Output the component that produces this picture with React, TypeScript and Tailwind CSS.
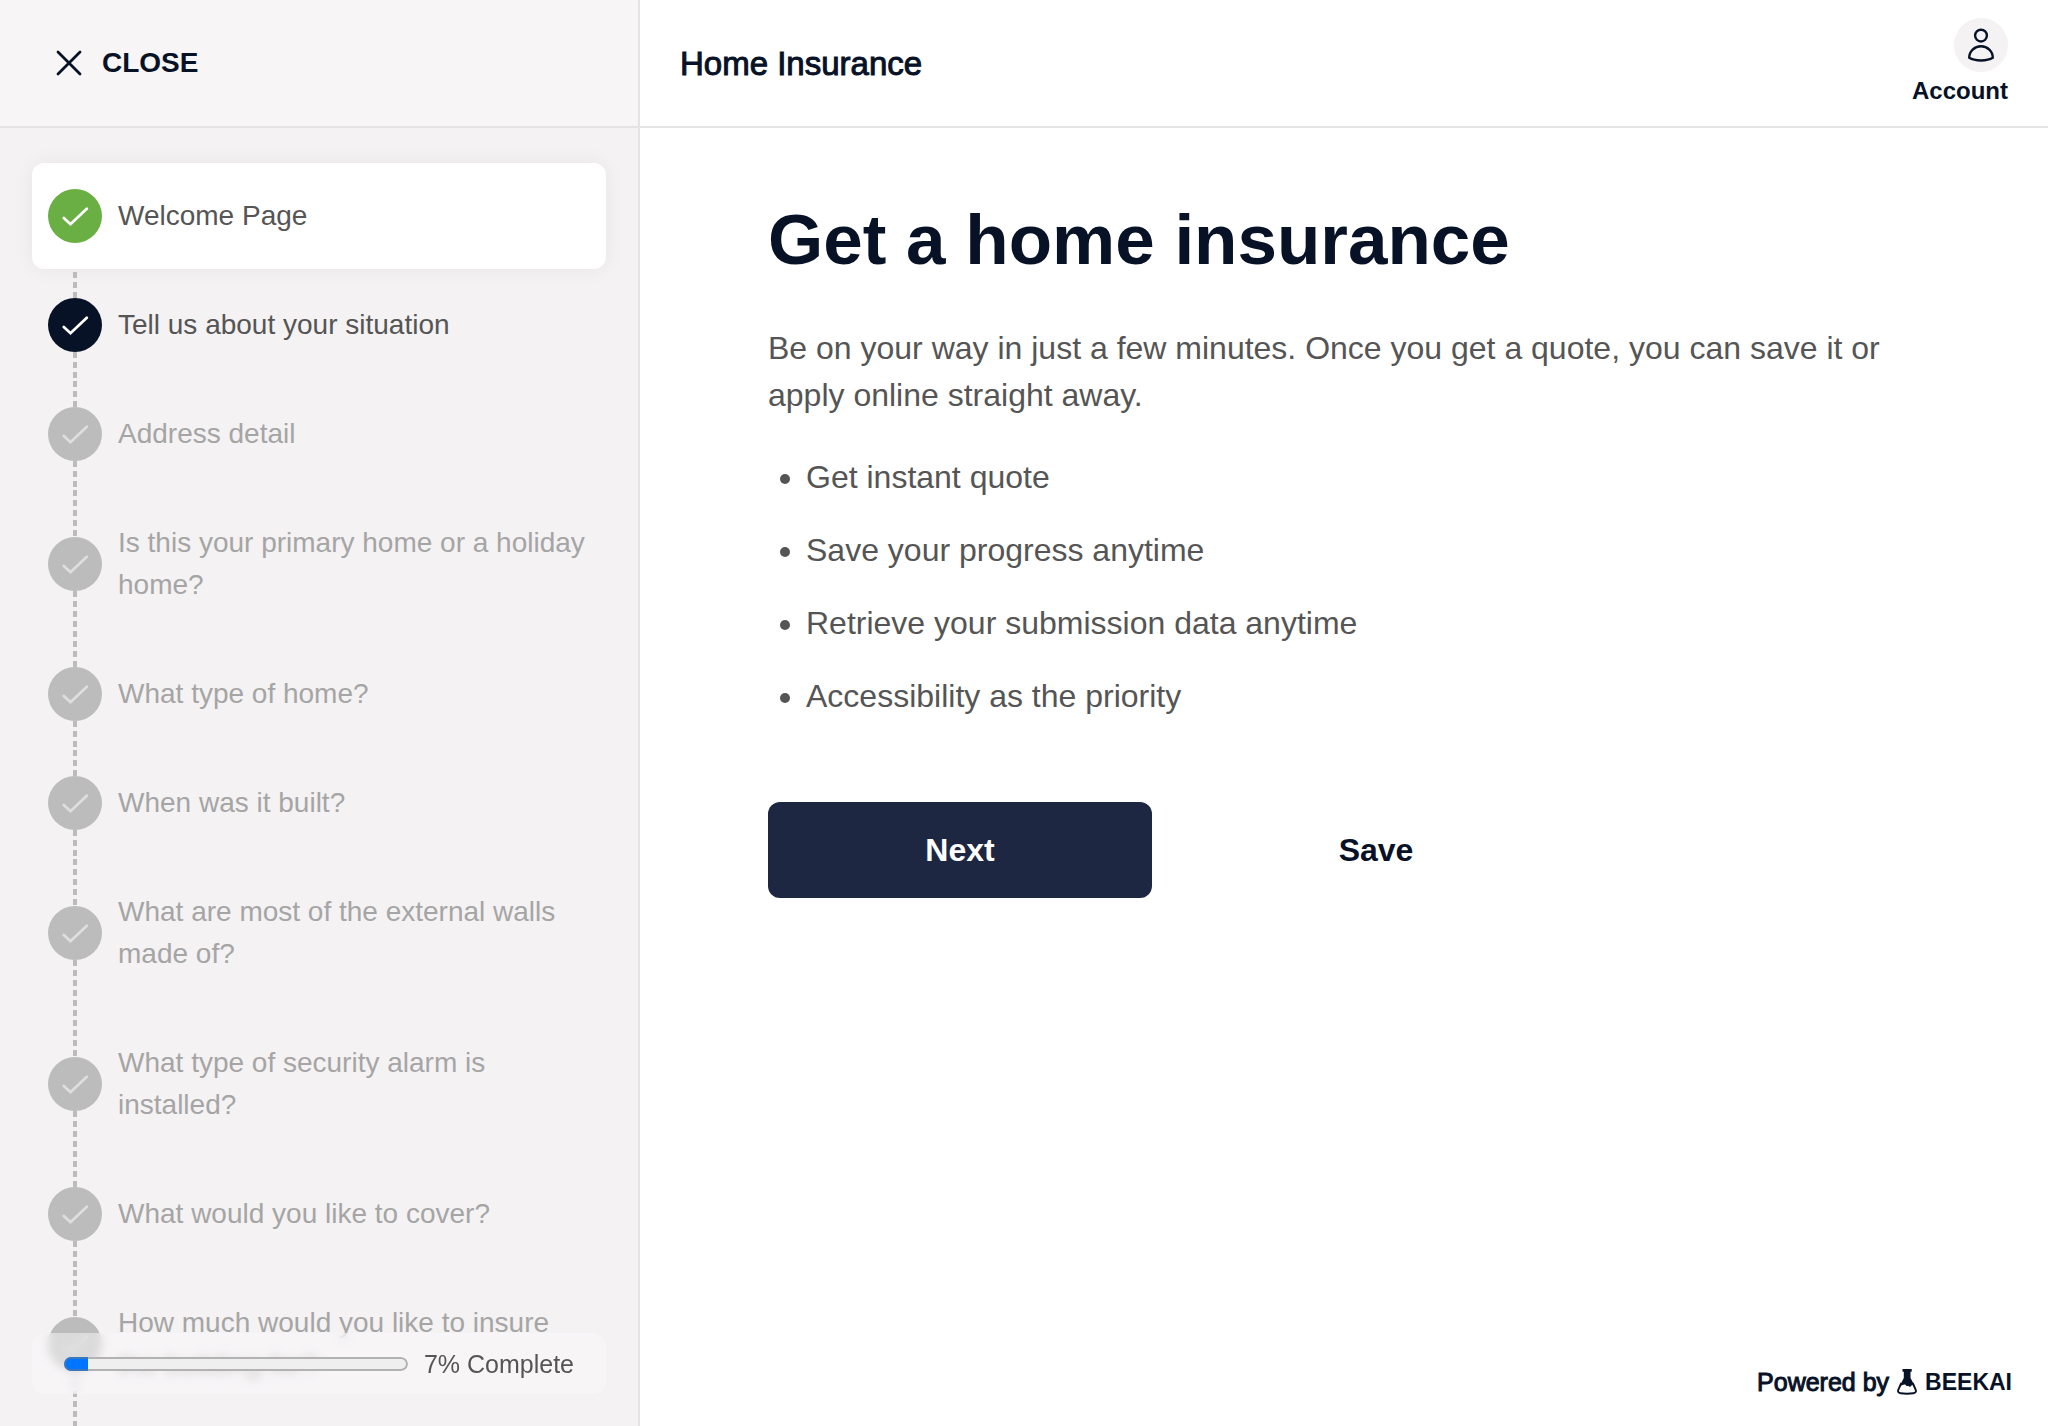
import { useState } from "react";
import clsx from "clsx";

type StepStatus = "current" | "visited" | "pending";

interface Step {
  label: string;
  status: StepStatus;
}

const STEPS: Step[] = [
  { label: "Welcome Page", status: "current" },
  { label: "Tell us about your situation", status: "visited" },
  { label: "Address detail", status: "pending" },
  { label: "Is this your primary home or a holiday home?", status: "pending" },
  { label: "What type of home?", status: "pending" },
  { label: "When was it built?", status: "pending" },
  { label: "What are most of the external walls made of?", status: "pending" },
  { label: "What type of security alarm is installed?", status: "pending" },
  { label: "What would you like to cover?", status: "pending" },
  { label: "How much would you like to insure the building for?", status: "pending" },
];

const BENEFITS = [
  "Get instant quote",
  "Save your progress anytime",
  "Retrieve your submission data anytime",
  "Accessibility as the priority",
];

const DASHES =
  "absolute left-[41px] w-1 bg-[repeating-linear-gradient(to_bottom,#bcbcbc_0px,#bcbcbc_6px,transparent_6px,transparent_10px)]";

function CheckIcon({ className }: { className?: string }) {
  return (
    <svg
      viewBox="0 0 54 54"
      fill="none"
      stroke="currentColor"
      strokeWidth="2.8"
      strokeLinecap="round"
      className={className}
      aria-hidden="true"
    >
      <path d="M15.8 29 22.5 35.2 38.8 19.7" />
    </svg>
  );
}

function CloseIcon() {
  return (
    <svg
      viewBox="0 0 26 26"
      fill="none"
      stroke="currentColor"
      strokeWidth="2.8"
      strokeLinecap="round"
      className="size-[26px]"
      aria-hidden="true"
    >
      <path d="M2 2 24 24M24 2 2 24" />
    </svg>
  );
}

function UserIcon() {
  return (
    <svg
      viewBox="0 0 54 54"
      fill="none"
      stroke="currentColor"
      strokeWidth="2.4"
      strokeLinejoin="round"
      className="size-[54px] rounded-full bg-[#f4f2f3]"
      aria-hidden="true"
    >
      <circle cx="27" cy="17.6" r="5.9" />
      <path d="M15.2 39.8C15.2 33.3 20.5 28.2 27 28.2s11.8 5.1 11.8 11.6c-5.5 3.5-18.1 3.5-23.6 0Z" />
    </svg>
  );
}

function FlaskIcon() {
  return (
    <svg viewBox="0 0 20 26" fill="none" className="h-[26px] w-5" aria-hidden="true">
      <path
        d="M5.5 0h9.2v2.700h-1.200v6.300l4 7.500-2.500-.8c-.8 2.200-2.800 2.600-3.800 1-1.200.6-2.200 0-2.700-1-1.500-1-3 .8-5.700 1L6.800 9V2.700H5.500Z"
        fill="currentColor"
      />
      <path
        d="M4.3 14 1.4 20.5c-.9 2.200 0 3.500 2.200 3.800q6.400.8 12.800 0c2.200-.3 3.100-1.600 2.200-3.800L15.700 14"
        stroke="currentColor"
        strokeWidth="1.9"
      />
    </svg>
  );
}

function StepItem({ step, isFirst, isLast }: { step: Step; isFirst: boolean; isLast: boolean }) {
  return (
    <li className="relative">
      {/* Dashed connectors above and below the icon */}
      {!isFirst && <span className={clsx(DASHES, "top-0 bottom-[calc(50%+26px)]")} />}
      <span className={clsx(DASHES, "top-[calc(50%+27px)]", isLast ? "-bottom-8" : "-bottom-[3px]")} />
      <a
        href="#step"
        aria-current={step.status === "current" ? "step" : undefined}
        className={clsx(
          "relative flex items-center gap-4 rounded-xl px-4 py-8 text-[28px] leading-[42px]",
          step.status === "current" && "bg-white text-[#555] shadow-[0_0_20px_rgba(0,0,0,0.06)]",
          step.status === "visited" && "text-[#555]",
          step.status === "pending" && "text-[#a5a5a5]",
        )}
      >
        <CheckIcon
          className={clsx(
            "-my-2 size-[54px] shrink-0 rounded-full",
            step.status === "current" && "bg-[#6aaf43] text-white",
            step.status === "visited" && "bg-[#071226] text-white",
            step.status === "pending" && "bg-[#bcbcbc] text-[#dedede]",
          )}
        />
        <span>{step.label}</span>
      </a>
    </li>
  );
}

function Sidebar({ progress }: { progress: number }) {
  return (
    <aside className="relative flex w-[640px] shrink-0 flex-col overflow-hidden border-r-2 border-[#e4e4e4] bg-[#f4f2f3]">
      <div className="flex h-32 shrink-0 items-center border-b-2 border-[#e4e4e4] bg-[#f7f5f6] px-14">
        <button type="button" className="flex items-center gap-5 text-[28px] leading-9 font-bold">
          <CloseIcon />
          CLOSE
        </button>
      </div>

      <nav className="min-h-0 flex-1 overflow-hidden px-8 pt-[35px]" aria-label="Form steps">
        <ol className="flex flex-col gap-[3px]">
          {STEPS.map((step, index) => (
            <StepItem
              key={step.label}
              step={step}
              isFirst={index === 0}
              isLast={index === STEPS.length - 1}
            />
          ))}
        </ol>
      </nav>

      {/* Floating progress */}
      <div className="absolute inset-x-8 bottom-8 flex h-[61px] items-center gap-4 rounded-xl bg-[#f9f8f9]/50 px-8 text-[25px] leading-9 text-[#555] backdrop-blur-[5px]">
        <div
          role="progressbar"
          aria-label="Form progress"
          aria-valuenow={progress}
          className="relative h-3.5 flex-1 overflow-hidden rounded-full bg-[#efefef]"
        >
          <div className="h-full bg-[#0075ff]" style={{ width: `${progress}%` }} />
          <span className="absolute inset-0 rounded-full border-2 border-[#767676]/50" />
        </div>
        <span>{progress}% Complete</span>
      </div>
    </aside>
  );
}

export default function App() {
  const [progress] = useState(7);

  return (
    <div className="flex h-screen bg-white font-['Liberation_Sans',Arial,sans-serif] text-[#071226]">
      <Sidebar progress={progress} />

      <div className="flex min-w-0 flex-1 flex-col">
        <header className="flex h-32 shrink-0 items-center justify-between border-b-2 border-[#e4e4e4] px-10">
          <p className="pt-0.5 text-[33px] leading-10 [-webkit-text-stroke:1px_currentColor]">Home Insurance</p>
          <button type="button" className="flex flex-col items-end gap-1 pb-0.5 text-[24px] leading-[30px] font-bold">
            <UserIcon />
            Account
          </button>
        </header>

        <main className="flex-1 px-32 pt-16">
          <h1 className="text-[71px] leading-[96px] font-bold">Get a home insurance</h1>
          <p className="mt-[37px] text-[32px] leading-[47px] text-[#555]">
            Be on your way in just a few minutes. Once you get a quote, you can save it or apply online straight away.
          </p>
          <ul className="mt-[35px] flex list-disc flex-col gap-[26px] pl-[38px] text-[32px] leading-[47px] text-[#555]">
            {BENEFITS.map((benefit) => (
              <li key={benefit}>{benefit}</li>
            ))}
          </ul>
          <div className="mt-[82px] flex gap-16 text-[32px] leading-10 font-bold">
            <button type="button" className="h-24 w-96 rounded-xl bg-[#1d2742] text-white">
              Next
            </button>
            <button type="button" className="h-24 w-80 rounded-xl">
              Save
            </button>
          </div>
        </main>

        <footer className="flex items-center justify-end gap-2 px-9 pb-7 text-[25px] leading-8">
          <span className="[-webkit-text-stroke:1px_currentColor]">Powered by</span>
          <a href="#beekai" className="flex items-center gap-2 text-[23px] font-bold">
            <FlaskIcon />
            BEEKAI
          </a>
        </footer>
      </div>
    </div>
  );
}
